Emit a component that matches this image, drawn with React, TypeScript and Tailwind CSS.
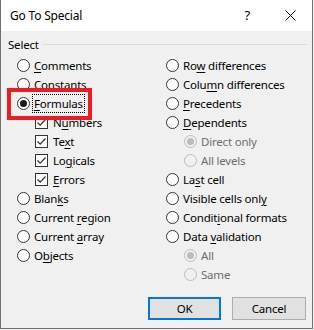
import React from 'react';

type Opt = { label: string; key?: number; kind: 'radio' | 'check'; checked?: boolean; disabled?: boolean; indent?: boolean; focus?: boolean };

const left: Opt[] = [
  { label: 'Comments', key: 0, kind: 'radio' },
  { label: 'Constants', key: 1, kind: 'radio' },
  { label: 'Formulas', key: 0, kind: 'radio', checked: true, focus: true },
  { label: 'Numbers', key: 1, kind: 'check', checked: true, indent: true },
  { label: 'Text', key: 2, kind: 'check', checked: true, indent: true },
  { label: 'Logicals', key: 2, kind: 'check', checked: true, indent: true },
  { label: 'Errors', key: 0, kind: 'check', checked: true, indent: true },
  { label: 'Blanks', key: 4, kind: 'radio' },
  { label: 'Current region', key: 8, kind: 'radio' },
  { label: 'Current array', key: 8, kind: 'radio' },
  { label: 'Objects', key: 1, kind: 'radio' },
];

const right: Opt[] = [
  { label: 'Row differences', key: 2, kind: 'radio' },
  { label: 'Column differences', key: 4, kind: 'radio' },
  { label: 'Precedents', key: 0, kind: 'radio' },
  { label: 'Dependents', key: 0, kind: 'radio' },
  { label: 'Direct only', kind: 'radio', checked: true, disabled: true, indent: true },
  { label: 'All levels', kind: 'radio', disabled: true, indent: true },
  { label: 'Last cell', key: 2, kind: 'radio' },
  { label: 'Visible cells only', key: 17, kind: 'radio' },
  { label: 'Conditional formats', key: 6, kind: 'radio' },
  { label: 'Data validation', key: 5, kind: 'radio' },
  { label: 'All', kind: 'radio', checked: true, disabled: true, indent: true },
  { label: 'Same', kind: 'radio', disabled: true, indent: true },
];

const Label = ({ o }: { o: Opt }) => {
  const text =
    o.key === undefined ? (
      o.label
    ) : (
      <>
        {o.label.slice(0, o.key)}
        <span className="underline underline-offset-2">{o.label[o.key]}</span>
        {o.label.slice(o.key + 1)}
      </>
    );
  return (
    <span
      className={`whitespace-nowrap leading-[14px] ${o.disabled ? 'text-[#6d6d6d]' : 'text-black'} ${
        o.focus ? 'outline outline-1 outline-dotted outline-black outline-offset-[1px]' : ''
      }`}
    >
      {text}
    </span>
  );
};

const Radio = ({ checked, disabled }: { checked?: boolean; disabled?: boolean }) => (
  <span
    className={`w-[13px] h-[13px] rounded-full border flex items-center justify-center shrink-0 ${
      disabled ? 'border-[#bcbcbc] bg-[#f0f0f0]' : 'border-[#333] bg-white'
    }`}
  >
    {checked && <span className={`w-[7px] h-[7px] rounded-full ${disabled ? 'bg-[#bcbcbc]' : 'bg-[#1a1a1a]'}`} />}
  </span>
);

const Check = () => (
  <span className="w-[13px] h-[13px] border border-[#333] bg-white flex items-center justify-center shrink-0">
    <svg width="11" height="11" viewBox="0 0 11 11">
      <path d="M1.5 5.5 L4.2 8.2 L9.5 2.5" fill="none" stroke="#333" strokeWidth="1.2" />
    </svg>
  </span>
);

const Row = ({ o }: { o: Opt }) => (
  <div className={`h-[19px] flex items-center ${o.indent ? 'pl-[18px]' : ''}`}>
    {o.kind === 'radio' ? <Radio checked={o.checked} disabled={o.disabled} /> : <Check />}
    <span className={o.kind === 'check' ? 'ml-[5px]' : 'ml-[4px]'}>
      <Label o={o} />
    </span>
  </div>
);

export default function App() {
  return (
    <div
      className="w-[314px] h-[330px] bg-[#f0f0f0] text-[11.5px] tracking-[-0.2px] relative overflow-hidden"
      style={{ fontFamily: '"Noto Sans", "Open Sans", sans-serif' }}
    >
      <div className="w-[313px] h-[329px] border-l border-r border-b border-[#707070] flex flex-col">
        {/* Title bar */}
        <div className="h-[31px] bg-white flex items-center pl-[9px] pr-[16px] shrink-0">
          <span className="flex-1 text-black text-[12px]">Go To Special</span>
          <span className="text-[13px] mr-[35px]">?</span>
          <svg width="11" height="11" viewBox="0 0 11 11">
            <path d="M0.5 0.5 L10.5 10.5 M10.5 0.5 L0.5 10.5" stroke="#000" strokeWidth="1" />
          </svg>
        </div>

        {/* Group: Select */}
        <div className="flex items-center h-[13px] mt-[7px] pl-[7px] pr-[5px]">
          <span>Select</span>
          <span className="flex-1 h-px bg-[#dcdcdc] ml-[4px]" />
        </div>

        <div className="grid grid-cols-[149px_1fr] pl-[16px] mt-[5px]">
          <div className="flex flex-col relative">
            {left.map(o => (
              <Row key={o.label} o={o} />
            ))}
            <div className="absolute left-[-10px] top-[32px] w-[85px] h-[32px] border-[4px] border-[#ec1c24]" />
          </div>
          <div className="flex flex-col">
            {right.map(o => (
              <Row key={o.label} o={o} />
            ))}
          </div>
        </div>

        <div className="flex justify-end gap-[11px] mt-auto mb-[8px] pr-[6px]">
          <button className="w-[73px] h-[23px] bg-[#e1e1e1] border-2 border-[#0078d7] text-black">OK</button>
          <button className="w-[74px] h-[23px] bg-[#e1e1e1] border border-[#adadad] text-black">Cancel</button>
        </div>
      </div>
    </div>
  );
}
